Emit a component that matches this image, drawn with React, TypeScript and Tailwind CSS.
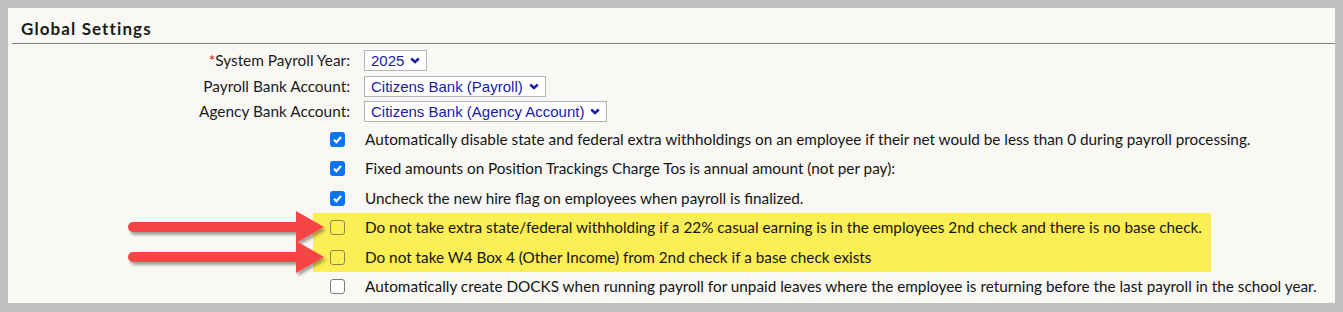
import React from 'react';

const font = { fontFamily: 'Lato, "Noto Sans", sans-serif' };

const Chevron = () => (
    <svg width="10" height="7" viewBox="0 0 10 7" className="ml-[6px]">
        <polyline points="1.2,1.5 5,5 8.8,1.5" fill="none" stroke="#1a1aa6" strokeWidth="2.4" />
    </svg>
);

const SelectBox = ({ value }: { value: string }) => (
    <div className="flex items-center h-[21px] pl-[6px] pr-[6px] bg-white border border-[#b5b5b5] text-[15px] text-[#1a1aa6] font-['Liberation_Sans',Arial,sans-serif] leading-none">
        <span>{value}</span>
        <Chevron />
    </div>
);

const SelectRow = ({ label, value, required }: { label: string; value: string; required?: boolean }) => (
    <div className="flex items-center h-[25.5px]">
        <div className="w-[342px] text-right text-[15.4px] text-[#1b1b1b]">
            {required && <span className="text-[#e0000f]">*</span>}
            {label}
        </div>
        <div className="ml-[14px]">
            <SelectBox value={value} />
        </div>
    </div>
);

const Box = ({ checked, tint }: { checked?: boolean; tint?: boolean }) => {
    if (checked) {
        return (
            <span className="flex items-center justify-center w-[15px] h-[15px] rounded-[3px] bg-[#0b74f5]">
                <svg width="11" height="11" viewBox="0 0 11 11">
                    <polyline points="2,5.8 4.4,8.2 9,3" fill="none" stroke="white" strokeWidth="2.2" />
                </svg>
            </span>
        );
    }
    return (
        <span
            className={
                tint
                    ? 'block w-[15px] h-[15px] rounded-[3px] border border-[#8a8a4a]'
                    : 'block w-[15px] h-[15px] rounded-[3px] border border-[#7a7a7a] bg-white'
            }
        />
    );
};

const CheckRow = ({ text, checked, tint }: { text: string; checked?: boolean; tint?: boolean }) => (
    <div className="flex items-center h-[29.5px]">
        <Box checked={checked} tint={tint} />
        <span className="ml-[20px] text-[15.3px] text-[#141414] whitespace-nowrap">{text}</span>
    </div>
);

export default function App() {
    return (
        <div className="relative w-[1343px] h-[312px] bg-[#c0c0c0] pt-2 pl-2 pr-2" style={font}>
            <div className="bg-[#f9f8f4] h-[295px]">
                {/* Header */}
                <div className="ml-1 h-[36px] border-b border-[#7f7f7f] flex items-end pb-[6px] pl-[9px]">
                    <h2 className="text-[17px] font-bold text-[#1b1b1b] leading-none tracking-[1.1px]">Global Settings</h2>
                </div>

                {/* Selects */}
                <div className="pt-[4px]">
                    <SelectRow label="System Payroll Year:" value="2025" required />
                    <SelectRow label="Payroll Bank Account:" value="Citizens Bank (Payroll)" />
                    <SelectRow label="Agency Bank Account:" value="Citizens Bank (Agency Account)" />
                </div>

                {/* Checkboxes */}
                <div>
                    <div className="pl-[322px]">
                        <CheckRow checked text="Automatically disable state and federal extra withholdings on an employee if their net would be less than 0 during payroll processing." />
                        <CheckRow checked text="Fixed amounts on Position Trackings Charge Tos is annual amount (not per pay):" />
                        <CheckRow checked text="Uncheck the new hire flag on employees when payroll is finalized." />
                    </div>
                    <div className="ml-[305px] w-[898px] bg-[#fbef55] pl-[17px]">
                        <CheckRow tint text="Do not take extra state/federal withholding if a 22% casual earning is in the employees 2nd check and there is no base check." />
                        <CheckRow tint text="Do not take W4 Box 4 (Other Income) from 2nd check if a base check exists" />
                    </div>
                    <div className="pl-[322px]">
                        <CheckRow text="Automatically create DOCKS when running payroll for unpaid leaves where the employee is returning before the last payroll in the school year." />
                    </div>
                </div>
            </div>

            {/* Annotation arrows */}
            <svg className="absolute left-0 top-0 pointer-events-none" width="1343" height="312">
                <defs>
                    <filter id="sh" x="-10%" y="-50%" width="120%" height="200%">
                        <feDropShadow dx="2" dy="3" stdDeviation="1.5" floodColor="#000" floodOpacity="0.35" />
                    </filter>
                </defs>
                <g fill="#f54444" filter="url(#sh)">
                    <rect x="128" y="222" width="175" height="10" rx="5" />
                    <polygon points="296,211 324,227 296,243" />
                    <rect x="128" y="252" width="175" height="10" rx="5" />
                    <polygon points="296,241 324,257 296,273" />
                </g>
            </svg>
        </div>
    );
}
